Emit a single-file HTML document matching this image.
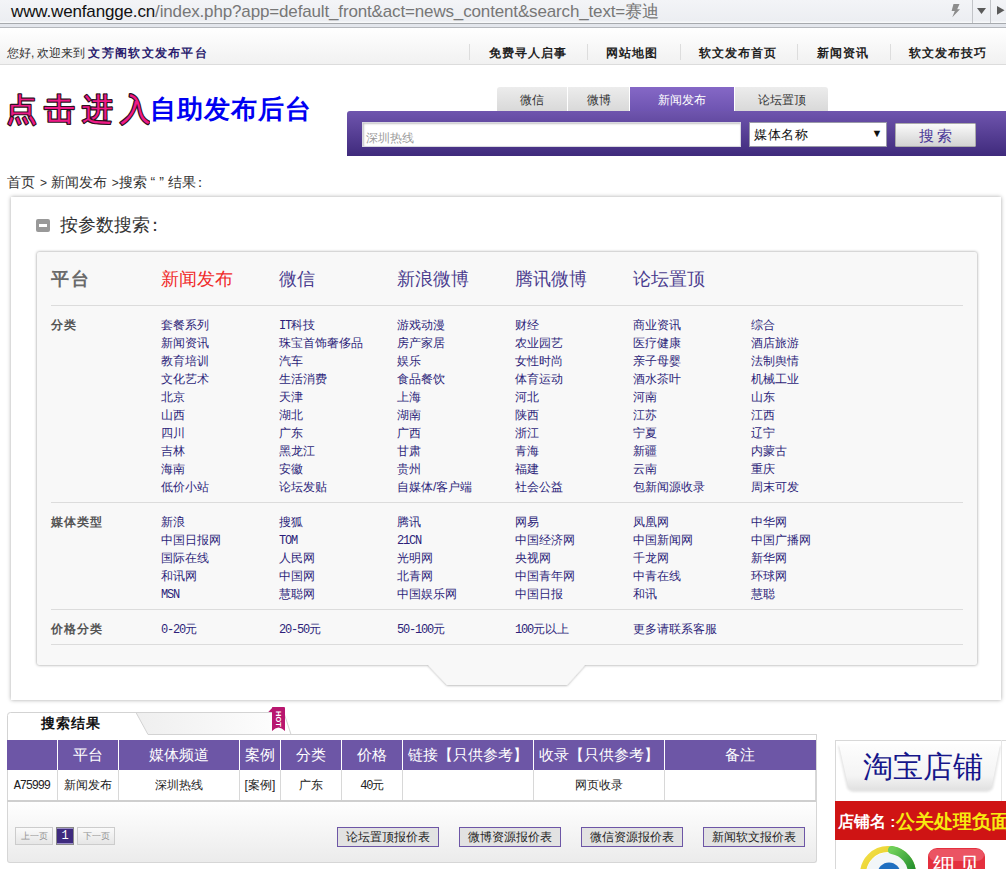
<!DOCTYPE html>
<html><head><meta charset="utf-8">
<style>
*{margin:0;padding:0;box-sizing:border-box}
html,body{width:1006px;height:869px;overflow:hidden;background:#fff}
body{position:relative;font-family:"Liberation Sans",sans-serif;font-size:12px;color:#333}
.a{position:absolute;white-space:nowrap}
/* address bar */
#addr{position:absolute;left:0;top:0;width:1006px;height:23px;background:linear-gradient(#f3f4f7,#eceef2 90%,#fafbfc)}
#addrline{position:absolute;left:0;top:23px;width:1006px;height:5px;background:#e3e6ec;border-top:1px solid #a7aaae;border-bottom:1px solid #b4b7bc}
#url{left:11px;top:0.5px;font-size:17px;line-height:22px;color:#777;letter-spacing:-0.15px}
#url b{font-weight:normal;color:#111}
/* top bar */
#topbar{position:absolute;left:0;top:28px;width:1006px;height:37px;background:linear-gradient(#fff,#f1f1f1);border-bottom:1px solid #dcdcdc}
.nav{font-weight:bold;color:#222;font-size:12px;top:45px;line-height:16px;letter-spacing:1px}
.sep{position:absolute;top:44px;width:1px;height:16px;background:#ddd}
/* header */
.tab{position:absolute;top:87px;height:24px;background:linear-gradient(#ececec,#d9d9d9);color:#333;font-size:12px;line-height:27px;text-align:center}
#sbar{position:absolute;left:347px;top:111px;width:659px;height:45px;background:linear-gradient(#6f55ae,#3f2a7c);border-radius:3px 0 0 0}

.plab{font-size:18px;line-height:22px;color:#6a6a6a;font-weight:bold;letter-spacing:1.5px}
.pitem{font-size:18px;line-height:22px;color:#4b3d8f}
.hl{left:51px;width:912px;height:1px;background:#dcdcdc}
.glab{font-size:12px;line-height:18px;color:#555;font-weight:bold;letter-spacing:1px}
.gcol{font-size:12px;line-height:18px;color:#2d1f7a}
.m{font-family:"Liberation Mono",monospace;letter-spacing:-1.2px;line-height:10px}

#res{border-collapse:collapse;table-layout:fixed;width:809px}
#res td{padding:0;text-align:center;white-space:nowrap;overflow:hidden}
#res .th td{height:30px;background:#6d56a6;color:#fff;font-size:14.5px;border-right:1px solid #fff}
#res .tr td{height:31px;font-size:12px;color:#222;border-right:1px solid #d8d8d8;border-bottom:2px solid #cfcfcf}
.pg{height:18px;border:1px solid #ccc;background:linear-gradient(#fafafa,#e6e6e6);font-size:9px;line-height:17px;text-align:center}
.btn{top:827px;width:102px;height:20px;border:1px solid #6d56a6;background:#e2e2e2;font-size:12px;line-height:18px;text-align:center;color:#222}
</style></head><body>
<div id="addr"></div><div id="addrline"></div>
<div class="a" id="url"><b>www.wenfangge.cn</b>/index.php?app=default_front&amp;act=news_content&amp;search_text=赛迪</div>

<svg class="a" style="left:940px;top:0" width="66" height="23">
<path d="M13.5,4 L19.5,4 L17.2,9.2 L20,9.2 L12.3,17.2 L14.8,11 L11.6,11 Z" fill="#8c8c8c"/>
<rect x="32" y="0" width="1" height="23" fill="#c2c4c8"/>
<path d="M37,8 L46,8 L41.5,14 Z" fill="#5a5a5a"/>
<rect x="50" y="0" width="1" height="23" fill="#c2c4c8"/>
<path d="M57,6 L64.5,10.3 L57,14.7 Z" fill="#5a5a5a"/>
</svg>
<div id="topbar"></div>
<div class="a" style="left:7px;top:45px;line-height:16px;color:#333">您好<span style="display:inline-block;width:6px">,</span>欢迎来到 <b style="color:#2b1d6e;letter-spacing:1.3px">文芳阁软文发布平台</b></div>
<div class="sep" style="left:469px"></div>
<div class="a nav" style="left:489px">免费寻人启事</div>
<div class="sep" style="left:587px"></div>
<div class="a nav" style="left:606px">网站地图</div>
<div class="sep" style="left:680px"></div>
<div class="a nav" style="left:699px">软文发布首页</div>
<div class="sep" style="left:797px"></div>
<div class="a nav" style="left:817px">新闻资讯</div>
<div class="sep" style="left:890px"></div>
<div class="a nav" style="left:909px">软文发布技巧</div>

<div class="tab" style="left:497px;width:70px;border-radius:3px 0 0 0">微信</div>
<div class="tab" style="left:568px;width:61px">微博</div>
<div class="tab" style="left:630px;width:104px;height:25px;background:linear-gradient(#8568c6,#6d53b0);color:#fff">新闻发布</div>
<div class="tab" style="left:735px;width:93px;border-radius:0 3px 0 0">论坛置顶</div>
<div id="sbar"></div>


<!-- logo -->
<svg class="a" style="left:0;top:80px" width="150" height="55"><text x="6" y="39.5" font-family="Liberation Sans" font-size="30.5" font-weight="500" letter-spacing="7" fill="#ee1a86" stroke="#2b1020" stroke-width="2.4" stroke-linejoin="round" paint-order="stroke">点击进入</text></svg>
<div class="a" id="logo2" style="left:149.5px;top:92px;font-size:26.3px;line-height:34px;font-weight:bold;color:#0000f2;letter-spacing:1.2px">自助发布后台</div>
<!-- search inputs -->
<div class="a" style="left:362px;top:122px;width:379px;height:25px;background:#fff;border:1px solid #d8d8e0;box-shadow:inset 1px 1px 2px #c4c4c4"></div>
<div class="a" style="left:366px;top:129.5px;font-size:12.2px;line-height:16px;color:#9a9a9a">深圳热线</div>
<div class="a" style="left:749px;top:122px;width:138px;height:25px;background:#fff;border:1px solid #9a9aa8"></div>
<div class="a" style="left:754px;top:126px;font-size:13px;line-height:17px;color:#111;letter-spacing:0.6px">媒体名称</div>
<div class="a" style="left:871.5px;top:125px;font-size:11px;line-height:17px;color:#111">▼</div>
<div class="a" style="left:895px;top:123px;width:81px;height:24px;background:linear-gradient(#fafafa,#d3d3d3);border:1px solid #aaa;border-radius:1px"></div>
<div class="a" style="left:919px;top:127px;font-size:14.5px;line-height:18px;color:#4a3898;letter-spacing:3px">搜索</div>
<!-- breadcrumb -->
<div class="a" style="left:7px;top:173px;font-size:14px;line-height:18px;color:#333">首页 <span style="font-size:12px;margin-left:1px">&gt;</span> 新闻发布 <span style="font-size:12px;margin-left:1px">&gt;</span>搜索 “ ” 结果<span style="margin-left:-3px">：</span></div>
<!-- param outer box -->
<div class="a" style="left:11px;top:197px;width:990px;height:503px;background:#fff;box-shadow:0 0 4px rgba(0,0,0,.35)"></div>
<div class="a" style="left:36px;top:219px;width:14px;height:13px;background:#999;border-radius:2px"></div>
<div class="a" style="left:39px;top:224px;width:8px;height:3px;background:#fff"></div>
<div class="a" style="left:60px;top:214px;font-size:18px;line-height:22px;color:#333">按参数搜索<span style="margin-left:-4px">：</span></div>
<div class="a" style="left:37px;top:252px;width:940px;height:413px;background:#f8f8f8;border-radius:2px;box-shadow:0 0 3px rgba(0,0,0,.45)"></div>

<svg class="a" style="left:420px;top:660px" width="180" height="32"><defs><filter id="sh" x="-10%" y="-30%" width="120%" height="160%"><feDropShadow dx="0" dy="0.5" stdDeviation="1" flood-color="#000" flood-opacity="0.35"/></filter></defs><polygon points="8,5 165,5 147,25 27,25" fill="#f8f8f8" filter="url(#sh)"/><rect x="0" y="0" width="180" height="5" fill="#f8f8f8"/></svg>
<!-- grid -->
<div id="grid">
<div class="a plab" style="left:51px;top:268px">平台</div>
<div class="a pitem" style="left:161px;top:268px;color:#f02a2a">新闻发布</div>
<div class="a pitem" style="left:279px;top:268px">微信</div>
<div class="a pitem" style="left:397px;top:268px">新浪微博</div>
<div class="a pitem" style="left:515px;top:268px">腾讯微博</div>
<div class="a pitem" style="left:633px;top:268px">论坛置顶</div>
<div class="a hl" style="top:305px"></div>
<div class="a hl" style="top:502px"></div>
<div class="a hl" style="top:609px"></div>
<div class="a hl" style="top:644px"></div>
<div class="a glab" style="left:51px;top:316px">分类</div>
<div class="a gcol" style="left:161px;top:316px">套餐系列<br>新闻资讯<br>教育培训<br>文化艺术<br>北京<br>山西<br>四川<br>吉林<br>海南<br>低价小站</div>
<div class="a gcol" style="left:279px;top:316px"><span class="m">IT</span>科技<br>珠宝首饰奢侈品<br>汽车<br>生活消费<br>天津<br>湖北<br>广东<br>黑龙江<br>安徽<br>论坛发贴</div>
<div class="a gcol" style="left:397px;top:316px">游戏动漫<br>房产家居<br>娱乐<br>食品餐饮<br>上海<br>湖南<br>广西<br>甘肃<br>贵州<br>自媒体/客户端</div>
<div class="a gcol" style="left:515px;top:316px">财经<br>农业园艺<br>女性时尚<br>体育运动<br>河北<br>陕西<br>浙江<br>青海<br>福建<br>社会公益</div>
<div class="a gcol" style="left:633px;top:316px">商业资讯<br>医疗健康<br>亲子母婴<br>酒水茶叶<br>河南<br>江苏<br>宁夏<br>新疆<br>云南<br>包新闻源收录</div>
<div class="a gcol" style="left:751px;top:316px">综合<br>酒店旅游<br>法制舆情<br>机械工业<br>山东<br>江西<br>辽宁<br>内蒙古<br>重庆<br>周末可发</div>
<div class="a glab" style="left:51px;top:513px">媒体类型</div>
<div class="a gcol" style="left:161px;top:513px">新浪<br>中国日报网<br>国际在线<br>和讯网<br><span class="m">MSN</span></div>
<div class="a gcol" style="left:279px;top:513px">搜狐<br><span class="m">TOM</span><br>人民网<br>中国网<br>慧聪网</div>
<div class="a gcol" style="left:397px;top:513px">腾讯<br><span class="m">21CN</span><br>光明网<br>北青网<br>中国娱乐网</div>
<div class="a gcol" style="left:515px;top:513px">网易<br>中国经济网<br>央视网<br>中国青年网<br>中国日报</div>
<div class="a gcol" style="left:633px;top:513px">凤凰网<br>中国新闻网<br>千龙网<br>中青在线<br>和讯</div>
<div class="a gcol" style="left:751px;top:513px">中华网<br>中国广播网<br>新华网<br>环球网<br>慧聪</div>
<div class="a glab" style="left:51px;top:620px">价格分类</div>
<div class="a gcol" style="left:161px;top:620px"><span class="m">0-20</span>元</div>
<div class="a gcol" style="left:279px;top:620px"><span class="m">20-50</span>元</div>
<div class="a gcol" style="left:397px;top:620px"><span class="m">50-100</span>元</div>
<div class="a gcol" style="left:515px;top:620px"><span class="m">100</span>元以上</div>
<div class="a gcol" style="left:633px;top:620px">更多请联系客服</div>
</div>

<!-- results -->
<div class="a" style="left:7px;top:734px;width:810px;height:129px;border:1px solid #d6d6d6;border-top:0;border-radius:0 0 3px 3px;background:linear-gradient(#fff 0,#fff 66px,#ebebeb 129px)"></div>
<svg class="a" style="left:0px;top:704px" width="830" height="40">
<defs><linearGradient id="tg" x1="0" y1="0" x2="1" y2="0"><stop offset="0" stop-color="#efefef"/><stop offset="1" stop-color="#fefefe"/></linearGradient></defs>
<path d="M7.5,36 L7.5,11.5 Q7.5,8.5 10.5,8.5 L281,8.5 L287.5,30.5 L816.5,30.5 L816.5,36 Z" fill="#fff"/>
<polygon points="136,9 281,9 287,30 148,30" fill="url(#tg)"/>
<path d="M7.5,36 L7.5,11.5 Q7.5,8.5 10.5,8.5 L281,8.5" fill="none" stroke="#d3d3d3"/>
<path d="M136,8.5 L148,30.5 L816.5,30.5 L816.5,36" fill="none" stroke="#d3d3d3"/>
<path d="M284,9 L291,30.5" fill="none" stroke="#d3d3d3"/>
<path d="M273,3 Q272,3 272,4 L272,27 Q278.5,20 285,27 L285,4 Q285,3 284,3 Z" fill="#b8166f"/>
<path d="M268.3,8 L273,3 L273,8 Z" fill="#b8166f"/>
<text x="0" y="0" fill="#fff" font-size="7.5" font-weight="bold" font-family="Liberation Sans" transform="translate(276 7) rotate(90)">HOT</text>
</svg>
<div class="a" style="left:41px;top:714px;font-size:14px;line-height:18px;font-weight:bold;color:#111;letter-spacing:1px">搜索结果</div>
<table id="res" class="a" style="left:7px;top:740px">
<tr class="th"><td style="width:50px"></td><td style="width:61px">平台</td><td style="width:121px">媒体频道</td><td style="width:41px">案例</td><td style="width:61px">分类</td><td style="width:61px">价格</td><td style="width:131px">链接【只供参考】</td><td style="width:130px">收录【只供参考】</td><td style="width:151px;border-right:0">备注</td></tr>
<tr class="tr"><td><span class="m">A75999</span></td><td>新闻发布</td><td>深圳热线</td><td>[案例]</td><td>广东</td><td><span class="m">40</span>元</td><td></td><td>网页收录</td><td></td></tr>
</table>
<!-- pager -->
<div class="a pg" style="left:15px;top:827px;width:38px;color:#939393">上一页</div>
<div class="a pg" style="left:56px;top:827px;width:18px;background:#3e2a7e;color:#fff;border:1px solid #888;box-shadow:inset 0 1px 0 #9d8fc8,inset 0 -1px 0 #9d8fc8;font-family:'Liberation Mono',monospace;font-size:12px;line-height:17px">1</div>
<div class="a pg" style="left:77px;top:827px;width:38px;color:#939393">下一页</div>
<div class="a btn" style="left:337px">论坛置顶报价表</div>
<div class="a btn" style="left:459px">微博资源报价表</div>
<div class="a btn" style="left:581px">微信资源报价表</div>
<div class="a btn" style="left:703px">新闻软文报价表</div>
<!-- sidebar -->
<div class="a" style="left:835px;top:740px;width:180px;height:140px;background:#fff;border:1px solid #d8d8d8"></div>
<svg class="a" style="left:835px;top:740px" width="171" height="129">
<defs>
<linearGradient id="rb" x1="0" y1="0" x2="0" y2="1"><stop offset="0" stop-color="#fdfdfd"/><stop offset="0.7" stop-color="#f4f4f4"/><stop offset="1" stop-color="#e2e2e2"/></linearGradient>
<filter id="bl"><feGaussianBlur stdDeviation="1.2"/></filter>
<radialGradient id="ci" cx="0.5" cy="0.5" r="0.5"><stop offset="0.55" stop-color="#fff"/><stop offset="0.7" stop-color="#9fd2e8"/><stop offset="1" stop-color="#3aa0d0"/></radialGradient>
</defs>
<path d="M3,6 L166,6 L158,48 Q156,52 150,52 L20,52 Q14,52 12,48 Z" fill="#e3e3e3" filter="url(#bl)"/>
<path d="M4,5 L165,5 L157,45 Q155,49 149,49 L21,49 Q15,49 13,45 Z" fill="url(#rb)"/>
<rect x="0" y="61" width="171" height="39" fill="#cf1414"/>
<defs><linearGradient id="yl" x1="0" y1="0" x2="1" y2="1"><stop offset="0" stop-color="#f3e04a"/><stop offset="1" stop-color="#d8b800"/></linearGradient>
<linearGradient id="gr" x1="0" y1="0" x2="1" y2="1"><stop offset="0" stop-color="#6fcf5a"/><stop offset="1" stop-color="#1f8a2a"/></linearGradient></defs>
<circle cx="53" cy="134" r="25" fill="none" stroke="url(#yl)" stroke-width="6"/>
<circle cx="53" cy="134" r="21.5" fill="#f2f6f8"/>
<path d="M57,110 A24,24 0 0 1 77,134" fill="none" stroke="url(#gr)" stroke-width="8" stroke-linecap="round"/>
<circle cx="54" cy="134" r="11.5" fill="#1f6fc0"/>
<rect x="93" y="108" width="57" height="50" rx="9" fill="#e4303e"/>
<rect x="94" y="109" width="55" height="12" rx="7" fill="#f27888" opacity="0.5"/>
<rect x="166" y="0" width="1" height="61" fill="#e6e6e6"/>
</svg>
<div class="a" style="left:862.5px;top:747px;font-size:29.5px;line-height:40px;color:#16168a">淘宝店铺</div>
<div class="a" style="left:838px;top:811px;font-size:15.5px;line-height:20px;font-weight:bold;color:#fff">店铺名 :<span style="color:#f7ea10;font-size:19px;letter-spacing:0px;margin-left:1px;position:relative;top:1px">公关处理负面</span></div>
<div class="a" style="left:933px;top:853px;font-size:22px;line-height:26px;font-weight:normal;color:#fff;letter-spacing:4px">细见</div>


</body></html>
